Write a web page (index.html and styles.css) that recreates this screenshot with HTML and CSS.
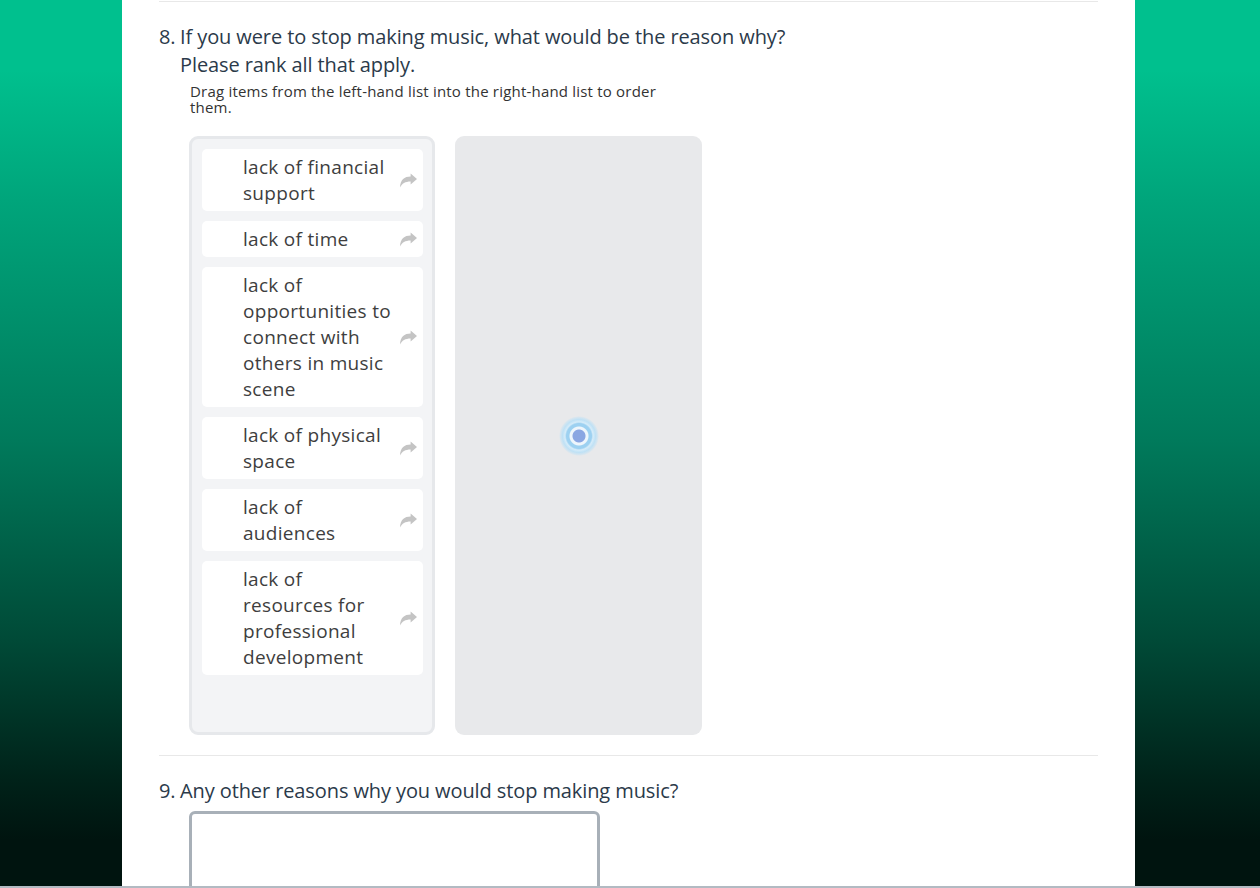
FILE: index.html
```html
<!DOCTYPE html>
<html lang="en">
<head>
<meta charset="utf-8">
<title>Survey</title>
<link rel="stylesheet" href="styles.css">
</head>
<body>
<div class="page">
  <div class="rule rule-top"></div>
  <section class="question">
    <h2 class="q-title">
      <span class="q-num">8.</span>
      <span class="q-text">
        <span class="q-line">If you were to stop making music, what would be the reason why?</span>
        <span class="q-line">Please rank all that apply.</span>
      </span>
    </h2>
    <p class="q-desc">Drag items from the left-hand list into the right-hand list to order them.</p>
    <div class="ranking">
      <ul class="rank-source">
        <li class="rank-item"><span class="rank-label">lack of financial support</span><span class="rank-arrow"><svg viewBox="0 0 16 14" width="17" height="15"><path d="M16 5.5 L10 0.3 V3.3 C4.2 3.3 0.3 6.3 0 13.6 C1.8 9.8 5 7.9 10 7.9 V10.8 Z"/></svg></span></li>
        <li class="rank-item"><span class="rank-label">lack of time</span><span class="rank-arrow"><svg viewBox="0 0 16 14" width="17" height="15"><path d="M16 5.5 L10 0.3 V3.3 C4.2 3.3 0.3 6.3 0 13.6 C1.8 9.8 5 7.9 10 7.9 V10.8 Z"/></svg></span></li>
        <li class="rank-item"><span class="rank-label">lack of opportunities to connect with others in music scene</span><span class="rank-arrow"><svg viewBox="0 0 16 14" width="17" height="15"><path d="M16 5.5 L10 0.3 V3.3 C4.2 3.3 0.3 6.3 0 13.6 C1.8 9.8 5 7.9 10 7.9 V10.8 Z"/></svg></span></li>
        <li class="rank-item"><span class="rank-label">lack of physical space</span><span class="rank-arrow"><svg viewBox="0 0 16 14" width="17" height="15"><path d="M16 5.5 L10 0.3 V3.3 C4.2 3.3 0.3 6.3 0 13.6 C1.8 9.8 5 7.9 10 7.9 V10.8 Z"/></svg></span></li>
        <li class="rank-item"><span class="rank-label">lack of audiences</span><span class="rank-arrow"><svg viewBox="0 0 16 14" width="17" height="15"><path d="M16 5.5 L10 0.3 V3.3 C4.2 3.3 0.3 6.3 0 13.6 C1.8 9.8 5 7.9 10 7.9 V10.8 Z"/></svg></span></li>
        <li class="rank-item"><span class="rank-label">lack of resources for professional development</span><span class="rank-arrow"><svg viewBox="0 0 16 14" width="17" height="15"><path d="M16 5.5 L10 0.3 V3.3 C4.2 3.3 0.3 6.3 0 13.6 C1.8 9.8 5 7.9 10 7.9 V10.8 Z"/></svg></span></li>
      </ul>
      <div class="rank-target">
        <span class="spinner"></span>
      </div>
    </div>
  </section>
  <div class="rule rule-mid"></div>
  <section class="question">
    <h2 class="q-title">
      <span class="q-num">9.</span>
      <span class="q-text"><span class="q-line">Any other reasons why you would stop making music?</span></span>
    </h2>
    <textarea class="answer" aria-label="Any other reasons"></textarea>
  </section>
</div>
<div class="scroll-edge"></div>
</body>
</html>
```

FILE: styles.css
```css
html, body {
  margin: 0;
  padding: 0;
  height: 100%;
}
body {
  font-family: "Open Sans", "Liberation Sans", sans-serif;
  background: linear-gradient(to bottom,
    #00c08e 0px, #00c08e 70px,
    #00a57b 200px,
    #007a5b 440px,
    #004a37 640px,
    #002219 780px,
    #00140f 840px,
    #00140f 888px);
  overflow: hidden;
}
.page {
  width: 1013px;
  margin-left: 122px;
  min-height: 888px;
  background: #fff;
  padding: 1px 37px 0;
  box-sizing: border-box;
}
.rule {
  height: 1px;
  background: #e8e8e8;
}
.rule-mid {
  margin-top: 20px;
}
.q-title {
  display: flex;
  margin: 21px 0 0;
  font-size: 20px;
  font-weight: 400;
  line-height: 28px;
  color: #2b3a4a;
  letter-spacing: -0.1px;
}
.q-num {
  width: 21px;
  flex: none;
}
.q-text {
  display: flex;
  flex-direction: column;
}
.q-desc {
  margin: 4px 0 0 31px;
  max-width: 480px;
  font-size: 15px;
  line-height: 16px;
  letter-spacing: 0.2px;
  color: #333;
}
.ranking {
  display: flex;
  gap: 20px;
  margin: 21px 0 0 30px;
}
.rank-source {
  list-style: none;
  margin: 0;
  width: 246px;
  height: 599px;
  box-sizing: border-box;
  padding: 10px 9px 10px 10px;
  background: #f3f4f6;
  border: 3px solid #e6e8eb;
  border-radius: 9px;
  display: flex;
  flex-direction: column;
  gap: 10px;
}
.rank-item {
  display: flex;
  align-items: center;
  background: #fff;
  border-radius: 5px;
  padding: 5px 0 5px 41px;
}
.rank-label {
  width: 150px;
  font-size: 19px;
  line-height: 26px;
  letter-spacing: 0.3px;
  color: #3e3e3e;
}
.rank-arrow {
  flex: 1;
  display: flex;
  justify-content: center;
}
.rank-arrow svg {
  fill: #c4c4c4;
  display: block;
}
.rank-target {
  width: 247px;
  height: 599px;
  background: #e8e9eb;
  border-radius: 9px;
  display: flex;
  align-items: center;
  justify-content: center;
}
.spinner {
  width: 40px;
  height: 40px;
  border-radius: 50%;
  background: radial-gradient(circle closest-side,
    #8aa6e2 0, #8aa6e2 6px,
    #eef6fc 7px, #eef6fc 9px,
    #9dd1f1 10px, #9dd1f1 12.5px,
    #d6ecf9 14px, #bfe1f5 16.5px,
    rgba(191, 225, 245, 0.5) 18.5px,
    rgba(191, 225, 245, 0) 20px);
}
.answer {
  display: block;
  margin: 6px 0 0 30px;
  width: 411px;
  height: 110px;
  box-sizing: border-box;
  border: 3px solid #a8b0b8;
  border-radius: 6px;
  resize: none;
  font: inherit;
}
.scroll-edge {
  position: fixed;
  left: 0;
  right: 0;
  bottom: 0;
  height: 2px;
  background: #b2bac2;
}
```
